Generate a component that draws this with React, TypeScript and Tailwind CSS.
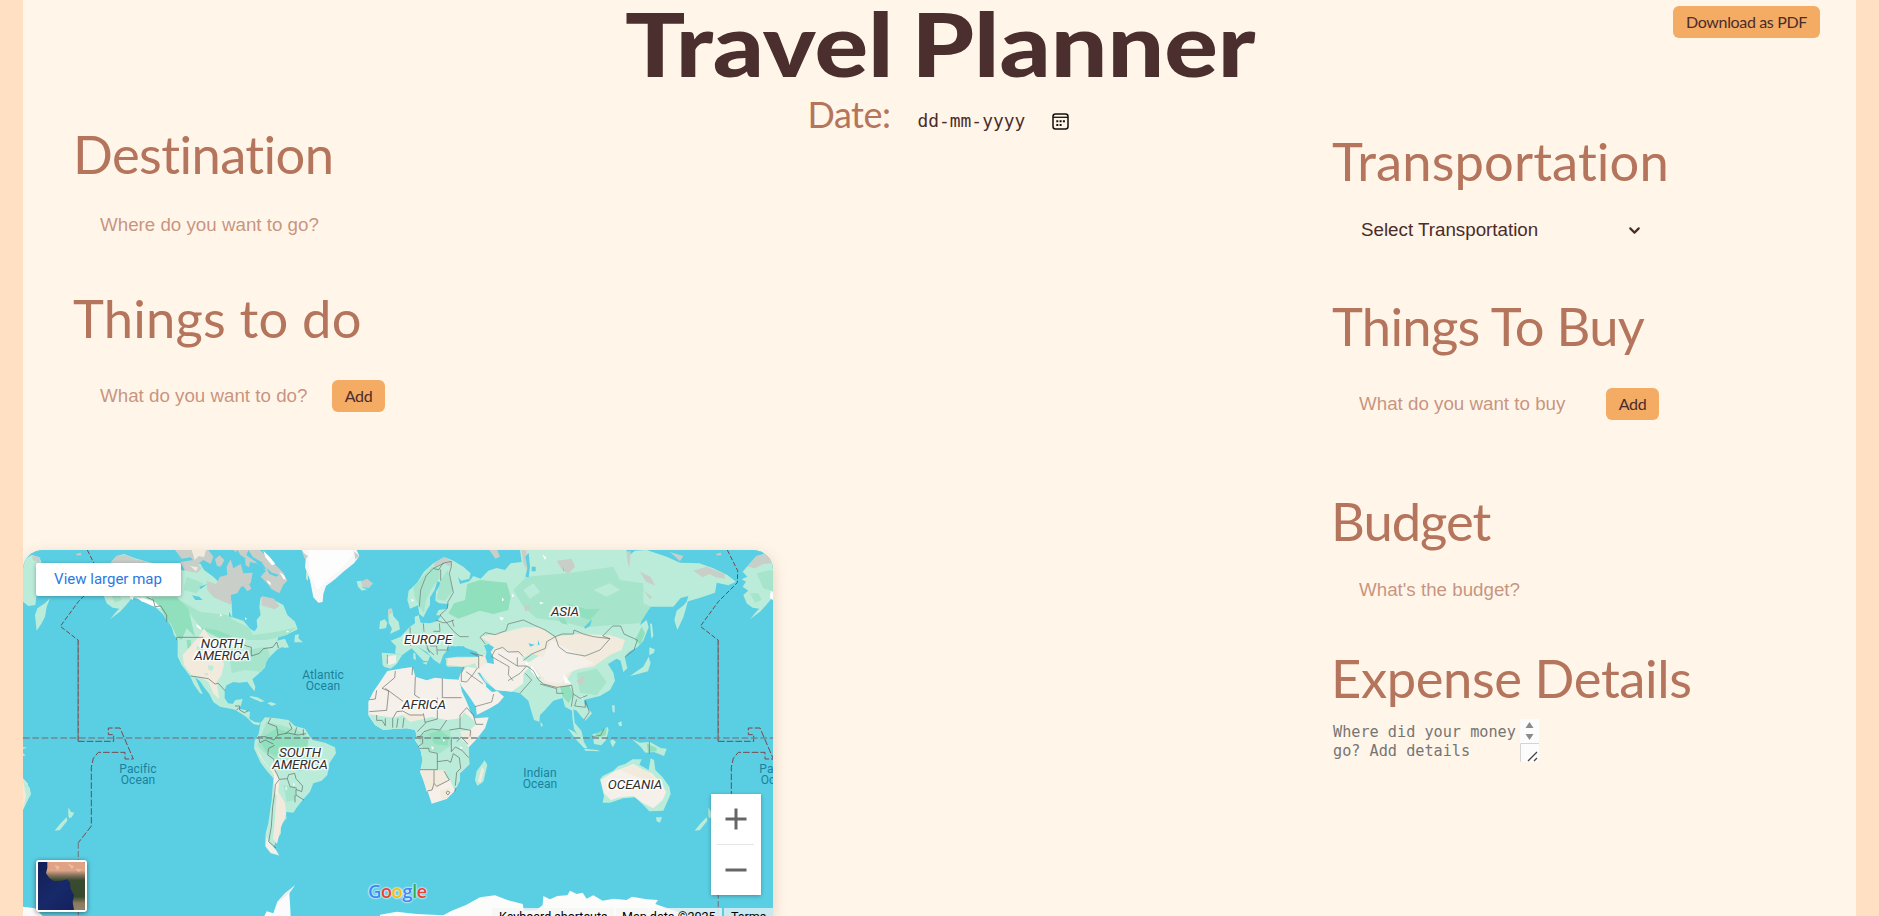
import React from "react";
import { ChevronDown } from "lucide-react";

const HEADING =
  "h-[60px] whitespace-nowrap font-[Lato,sans-serif] text-[52.5px] leading-[62px] text-[#b5745c] [font-variant-ligatures:none]";
const INPUT =
  "h-10 bg-transparent pt-[2px] font-['Liberation_Sans',sans-serif] text-[18.75px] leading-[38px] text-[#4a2c2a] outline-none placeholder:text-[#b5745c]/75";
const BUTTON =
  "h-8 shrink-0 whitespace-nowrap rounded-md bg-[#f4ab64] font-[Lato,sans-serif] text-[16px] leading-8 tracking-[-0.35px] text-[#4a2c2a]";

const WATER = "#5acfe3";
const GREEN = "#bbecd9";
const MID = "#a6e5cb";
const DEEP = "#90dfbd";
const SAND = "#f2eadc";
const PALE = "#f5f0e9";
const GRAY = "#c9cec9";

function CalendarIcon() {
  return (
    <svg width="17" height="17" viewBox="0 0 17 17" fill="none" stroke="#111" strokeWidth="1.5">
      <rect x="1" y="1" width="15" height="15" rx="2.5" />
      <path d="M1 4.3h15" strokeWidth="1.3" />
      <path d="M4.3 8.3h2M7.6 8.3h2M10.9 8.3h2M4.3 11.9h2M7.6 11.9h2" strokeWidth="2" />
    </svg>
  );
}

function Alaska() {
  return (
    <g>
      <path fill={GREEN} d="M308,140 L318,125 305,118 322,110 308,95 330,70 350,48 372,42 405,55 445,66 445,178 415,178 398,172 378,196 360,215 330,238 350,214 358,206 338,203 320,190 310,165 325,152z" />
      <path fill={GRAY} d="M322,80 L350,48 375,44 405,58 445,66 440,82 400,70 370,72 345,85z" />
      <path fill={MID} d="M350,100 l40,-10 50,15 0,40 -40,10 -30,-10z M330,160 l25,0 10,20 -20,8z" />
      <path fill="#fff" d="M392,152 l12,8 -6,20 -8,-6z M410,172 l20,4 12,12 -18,-4z" />
    </g>
  );
}

function Kamchatka() {
  return (
    <path fill={GREEN} d="M105,225 L112,205 135,190 150,175 140,200 135,230 125,250 110,272z" />
  );
}

function DateLine() {
  return (
    <g fill="none">
      <path stroke="#7a474b" strokeWidth="3" strokeDasharray="14 6" d="M262,30 L282,70 293,92 292,128 235,185 181,259 234,300" />
      <path stroke="#7d8b95" strokeWidth="5" d="M234,300 V604" />
      <path stroke="#7a474b" strokeWidth="2" strokeDasharray="16 6" d="M235,300 V604" />
      <path stroke="#7a474b" strokeWidth="3" strokeDasharray="20 6" d="M234,604 H341 V584 H325 V564 H360 L400,657 H375 V637 H295 L280,655 274,682 V858 L235,908" />
      <path stroke="#6f8692" strokeWidth="4" strokeDasharray="18 7" d="M235,908 V1130" />
    </g>
  );
}

function NewZealand() {
  return (
    <g fill={GREEN}>
      <path d="M205,802 l8,14 10,2 -8,14 -8,3 -2,-10z" />
      <path d="M200,832 l2,10 -22,28 -16,2 14,-18z" />
    </g>
  );
}

function Americas() {
  return (
    <g>
      <path fill={GREEN} d="M440,66 L480,72 530,75 548,92 575,85 600,70 612,90 640,110 690,160 695,192 697,232 730,242 752,268 764,274 772,262 770,240 782,225 778,200 782,172 826,182 850,195 862,225 885,245 893,268 865,282 835,292 832,302 855,296 866,322 845,322 830,330 812,348 800,360 795,382 775,402 757,418 766,440 764,454 752,440 742,425 718,428 700,426 680,436 674,450 674,475 684,490 698,492 706,480 728,477 722,498 718,506 735,510 750,516 748,536 764,546 782,548 776,556 760,552 738,530 722,520 700,508 660,500 640,486 628,462 612,442 600,424 585,412 608,462 600,460 582,434 570,408 545,375 533,350 533,300 522,285 515,260 500,240 488,222 465,200 440,185z" />
      <path fill={MID} d="M540,180 L600,215 680,225 700,240 745,262 760,285 830,275 890,262 860,285 800,300 745,300 700,290 640,280 600,262z M690,360 l50,-30 60,-10 10,25 -25,50 -50,-5 -40,10z M560,110 l50,20 -20,30 -40,-10z" />
      <path fill={DEEP} d="M455,172 L530,172 565,205 575,250 585,290 560,265 545,300 530,290 515,255 500,240 485,210 462,192z M590,260 l60,10 50,20 -30,10z M560,300 l12,0 4,30 -14,-5z" />
      <path fill={SAND} d="M572,318 L600,285 612,265 625,285 640,300 660,340 672,372 665,405 650,425 658,478 640,460 625,425 600,412 575,406 552,375 548,345z" />
      <path fill={GREEN} d="M590,318 l20,6 -6,16 -14,-4z M625,375 l16,4 -4,14 -12,-4z M610,400 l14,0 -2,8z" />
      <path fill={GRAY} d="M620,122 L648,132 660,110 682,105 680,80 692,58 700,85 722,72 730,100 758,98 752,130 722,142 712,160 692,165 695,195 664,182 640,172 622,150z M540,66 L580,60 606,84 592,98 556,92z M700,30 H780 L810,60 830,78 850,98 862,122 850,134 838,160 815,148 800,128 782,110 798,92 770,70 740,64 722,50z M525,30 H625 L640,50 632,72 610,60 590,74 572,52 545,56z M645,58 l14,-12 14,14 -10,20 -12,-2z M786,168 l36,8 16,22 -14,10 -40,-12z M730,138 l18,-6 6,14 -12,8z M735,54 l16,8 -4,20 -10,-6z" />
      <path fill={SAND} d="M575,30 H618 L612,52 596,48 584,60z M570,78 l24,4 -6,12z" />
      <path fill={WATER} d="M655,92 l12,-20 5,26z M745,30 l14,22 26,14 14,22 -12,-2 -22,-22 -26,-18z M576,166 l22,4 10,10 -22,0z M598,140 l24,-8 -20,16z M688,215 l8,18 -10,-4z" />
      <path fill={WATER} d="M712,30 l10,16 16,10 -8,6 -14,-10 -10,-14z M668,30 l8,18 -10,4 -10,-20z M800,84 l16,14 20,6 -6,6 -22,-8z" />
      <path fill="#fff" d="M790,32 l20,20 16,20 -10,4 -20,-24z M425,172 l40,14 20,20 -28,-8 -34,-16z M590,252 l14,12 0,6 -14,-10z M660,222 l6,4 -6,4z M735,232 l6,4 -5,4z M860,272 l8,2 -8,4z M838,96 l14,10 6,14 -8,-4z M800,120 l10,6 4,10 -10,-6z" />
      <path fill="#f7f7f7" d="M905,30 L918,50 915,82 930,120 940,172 955,188 968,186 970,162 978,138 1005,118 1030,95 1062,70 1078,48 1070,30z" />
      <path fill="#fdfdfd" d="M925,30 L930,100 952,150 985,118 1020,90 1060,45 1055,30z" />
      <path fill={GRAY} d="M906,36 l18,12 -8,12z M1062,34 l16,14 -12,10z M1085,124 l16,-8 18,14 -12,14 -20,-2z" />
      <path fill={GREEN} d="M1070,124 l14,-2 4,22 14,4 -16,4 -12,-12z M885,285 l12,-2 -2,12 14,12 -26,0z M862,312 l4,10 -16,2z" />
      <path fill={GREEN} d="M750,468 l22,4 22,12 -12,2 -32,-14z M802,490 l10,-4 18,6 -14,6z M918,94 l6,8 0,20 -6,-6z" />
      <path fill={GREEN} d="M782,548 L795,532 830,535 865,540 885,558 915,566 930,590 938,600 975,608 1005,622 1008,640 988,670 982,705 965,722 940,730 930,755 910,778 892,800 880,818 855,815 860,835 842,856 843,880 830,900 820,922 838,947 812,940 795,918 797,880 805,850 815,780 820,715 800,692 782,668 762,625 764,602 776,582z" />
      <path fill={MID} d="M800,545 l40,10 50,15 35,20 0,30 30,30 0,25 -60,20 -60,-30 -45,-30 -18,-20z M850,735 l40,10 -5,35 -25,5z" />
      <path fill={DEEP} d="M790,590 L830,565 890,585 925,600 920,625 850,620 830,650 800,635 782,610z" />
      <path fill={SAND} d="M765,618 l16,34 24,30 18,8 16,26 -4,40 20,32 4,34 -16,40 -12,50 -12,-16 6,-60 8,-112 -22,-36 -22,-30z" />
      <path fill={PALE} d="M822,700 l14,18 -4,50 -10,-10z M800,890 l8,18 20,22 8,14 -24,-6 -14,-18z" />
      <path fill="#fff" d="M856,740 l6,4 -4,8z M880,728 l5,5 -5,6z" />
      <g fill="none" stroke="#5d6965" strokeWidth="2">
        <path d="M530,292 H610 M530,292 v8 M700,300 L740,318 754,322 754,348 778,340 790,326 818,322 830,306 836,325" />
        <path d="M440,172 L460,180 465,200 482,198 500,225 500,245 M572,408 L600,412 625,416 645,432 655,430 675,452 M705,498 h14 v12 l14,8 12,-6 M708,512 l10,-10" />
        <path d="M812,534 L804,550 830,560 834,585 822,600 796,590 775,590 780,608 796,600 820,612 M868,548 l8,18 -20,15 M890,562 l-6,22 M910,568 l0,18 M834,585 l30,-6 30,6 24,-4 M824,616 L806,625 803,645 822,658 824,690 830,700 838,718 862,716 866,704 884,700 888,716 908,738 905,755 888,748 888,765 912,780 M838,718 L826,734 824,760 818,800 814,860 806,905 828,924 M862,716 l8,24 20,4 M885,765 l0,22" />
      </g>
    </g>
  );
}

function OldWorld() {
  return (
    <g>
      <path fill={GREEN} d="M5,338 L48,341 66,346 50,372 32,386 12,380 8,374z" />
      <path fill={GREEN} d="M45,340 L48,318 32,302 62,290 88,262 105,250 104,230 116,226 122,248 150,250 172,243 184,226 168,226 176,210 202,206 206,192 178,190 166,182 168,155 184,128 172,124 164,150 150,172 150,195 142,208 130,232 118,222 114,196 90,206 82,180 86,152 110,130 132,95 160,70 192,52 216,60 250,80 272,100 268,116 244,122 234,112 240,132 268,124 280,108 302,116 325,92 350,84 375,90 392,70 425,66 420,30 H740 L742,50 765,32 800,30 860,50 900,68 958,70 1000,85 1042,105 1068,125 1045,136 1010,128 1005,158 965,172 920,185 925,168 902,174 880,200 812,200 786,235 780,256 800,240 806,262 790,302 772,322 748,335 734,350 742,385 730,396 725,376 722,362 710,356 684,372 700,398 705,422 690,450 660,468 632,475 612,480 614,492 636,520 616,542 604,530 590,512 580,508 584,548 604,572 612,604 594,588 582,566 578,540 576,512 555,500 548,474 520,482 495,510 480,525 478,545 462,540 450,500 445,482 420,460 400,455 345,450 318,430 312,412 300,400 285,395 240,405 252,380 202,380 196,355 230,350 300,350 290,335 240,318 210,320 190,345 180,372 162,360 140,336 110,318 150,348 144,364 130,362 95,325 66,346z" />
      <path fill={SAND} d="M300,290 L380,275 430,262 480,262 520,290 590,282 690,286 735,300 725,330 690,345 640,380 580,390 560,420 575,445 520,440 490,430 470,408 440,380 300,400 285,370 250,380 200,374 205,355 290,352 330,340 330,310z" />
      <path fill={PALE} d="M345,325 L430,345 490,350 515,300 540,315 600,345 640,370 600,385 560,400 545,430 500,425 455,375 430,400 430,430 395,455 345,450 312,412 296,385 330,365z" />
      <path fill={PALE} d="M242,400 L262,380 298,386 320,430 318,440 335,455 352,453 372,470 355,490 330,505 290,525 285,500 265,470 245,440 236,418z" />
      <path fill={PALE} d="M18,350 l30,-4 0,22 -22,8z" />
      <path fill={MID} d="M100,140 L155,80 180,85 178,115 158,140 138,180 132,220 118,200 104,170z M182,120 l20,-30 18,60 -25,32 -25,-4z M440,110 L560,100 700,80 720,120 790,130 790,190 812,200 780,250 700,255 610,262 550,245 470,235 430,200 400,150z M590,400 l60,-14 30,40 -30,40 -50,-8z" />
      <path fill={DEEP} d="M262,132 L300,120 380,128 392,170 385,210 340,222 300,212 235,236 205,220 222,190 255,180z M520,210 l24,10 20,34 -20,-4z M560,190 l60,18 40,-2 -30,34 -30,-10z M765,300 l20,-40 10,20 -14,34z M540,440 l28,-4 12,28 -14,26 -18,-20z" />
      <path fill={GREEN} d="M430,150 l30,-20 20,26 -30,20z M640,150 l50,-20 30,20 -40,20z M425,355 l30,-14 22,6 -30,20z M440,375 l20,10 24,30 -14,4z" />
      <path fill={GRAY} d="M160,72 l32,-20 24,12 -6,16 -20,-12 -24,14z M530,62 l45,-6 10,24 -20,22 -20,-14z M780,95 l32,16 14,26 -28,-12z M790,150 l26,22 -6,6z M940,92 l40,-12 54,22 0,14 -26,-4 -20,-10 -20,10z M432,200 l14,-6 6,12 -16,8z M328,30 h24 l8,20 -14,6z M424,30 h16 l0,60 -10,-20z M590,422 l20,-14 4,16 -14,12z M740,34 l12,0 -4,50 -6,-20z M870,36 l40,12 -10,16z" />
      <path fill={WATER} d="M436,50 L446,38 450,80 446,112 436,110 442,85z M455,80 h12 v14 h-12z M200,340 L202,322 218,318 232,325 250,318 270,335 282,345 240,345 218,350z M312,316 L326,312 342,322 332,336 340,352 342,372 322,368 316,350 320,336z M292,398 L300,398 316,426 340,444 350,452 338,456 320,436z M238,440 L246,440 268,470 288,500 290,524 282,520 262,480z M445,310 l20,4 -14,6z M475,300 l4,14 -6,2z M612,262 l24,-24 -6,20 -14,8z M548,80 l5,12 -3,2z" />
      <path fill="#fff" d="M455,376 l24,34 -12,0 -16,-20z M550,402 l24,30 -20,-4z M487,44 l12,8 -4,8z M395,160 l8,8 -6,4z M366,172 l6,8 -6,4z M478,185 l14,4 -10,4z M358,230 l14,4 -8,8z M94,176 l8,4 -6,6z M600,470 l10,0 -2,8z M436,366 l10,4 -6,10z" />
      <path fill={GREEN} d="M24,210 l12,-4 4,22 16,18 4,22 -30,14 6,-16 -10,-18z M0,244 l14,-6 8,10 -4,16 -20,4z M126,368 l16,-2 -2,8z M100,340 l6,0 2,20 -8,-4z M198,368 l6,4 -6,6z" />
      <path fill={GRAY} d="M24,208 l10,-4 2,14 -10,6z" />
      <path fill={GREEN} d="M808,322 l16,6 -2,10 -14,8z M806,350 l6,20 -8,24 -30,8 -24,6 20,-14 20,-14z M810,250 l6,2 4,36 -6,8z M883,240 L890,212 912,195 925,178 918,205 910,232 892,270z" />
      <path fill={GREEN} d="M696,496 l8,0 0,22 -6,-2z M564,566 l20,10 26,26 12,22 -10,0 -26,-28z M638,582 l24,-4 20,-18 4,10 -8,30 -14,16 -22,-4z M690,604 l8,-6 10,8 -10,16z M612,626 l40,4 8,4 -44,-2z M756,598 l24,10 30,-2 32,18 18,2 -8,22 -30,-12 -26,2 -14,-18z M714,548 l10,-4 2,14 -8,0z M481,545 l8,10 -6,6z" />
      <path fill={DEEP} d="M645,582 l20,-10 16,-8 -4,22 -20,6z M800,610 l30,14 0,10 -26,2z" />
      <path fill={GREEN} d="M828,832 h18 l-6,16 -10,-4z" />
      <path fill={GREEN} d="M660,718 L668,708 700,692 715,678 735,672 758,658 785,658 778,674 806,690 812,655 822,660 826,690 848,712 868,740 872,762 850,812 808,814 790,795 765,772 730,775 690,788 668,788 672,768z" />
      <path fill={PALE} d="M662,720 L705,693 740,680 760,672 790,690 815,700 846,732 858,756 848,780 820,805 790,790 760,768 720,772 692,780 672,760z" />
      <path fill={SAND} d="M720,690 l40,-14 50,24 30,30 10,24 -20,-10 -50,-30z" />
      <g transform="translate(-60,375)">
        <path fill={PALE} d="M82,18 L130,10 158,6 166,35 200,46 225,38 262,42 298,44 306,80 320,110 332,142 345,160 386,157 375,190 350,222 325,248 328,298 300,325 300,345 284,378 260,402 215,416 205,385 180,320 188,285 180,248 165,225 170,210 165,195 140,190 100,192 70,195 45,180 25,150 25,110 40,80 66,42z" />
        <path fill={GREEN} d="M26,148 L60,152 100,158 128,150 150,170 190,162 215,155 260,165 300,160 312,142 340,165 348,178 330,195 300,200 310,215 326,248 328,298 300,325 300,345 284,376 270,345 240,330 215,316 182,314 188,285 180,248 165,225 170,210 165,195 140,190 100,192 70,195 45,180z" />
        <path fill={MID} d="M170,215 L210,195 270,195 275,240 240,265 190,250z" />
        <path fill={DEEP} d="M205,208 L240,195 268,215 262,242 225,238z" />
        <path fill={SAND} d="M128,148 l60,0 0,14 -40,6z M182,316 L255,316 262,350 230,370 200,380z M302,198 l34,0 6,24 -20,16 -18,-14z M240,378 l30,-10 -6,30 -20,6z" />
        <path fill={GREEN} d="M374,286 L382,300 370,350 352,362 345,345 350,318z" />
        <path fill={SAND} d="M366,305 l6,10 -10,38 -8,-4z" />
        <path fill="#fff" d="M214,242 l8,6 -6,6z M300,244 l8,4 -6,6z M248,222 l8,4 -6,4z" />
        <g fill="none" stroke="#646a67" strokeWidth="2">
          <path d="M66,70 L104,38 106,18 M66,70 L86,78 80,136 28,140 M76,70 L130,110 M166,35 L164,90 180,100 M158,6 L156,30 M247,40 V98 H305 M232,98 V130 M28,104 L46,102 50,76 M100,158 L110,140 128,138 150,150 190,150 M190,145 L196,175 172,200 M232,130 L232,162 M232,162 L196,172 M260,165 L240,195 215,192 192,200 180,215 170,215 M300,150 L300,190 268,195 M300,150 L320,128 340,150 348,178 370,178 M300,190 L332,196 330,215 M50,150 v16 l16,0 10,16 M76,160 v22 M98,158 v30 M114,160 l-4,28 M132,158 l-4,30 M180,250 L206,250 208,260 232,265 232,314 H180 M222,316 V355 L230,364 268,345 252,318 M222,355 L216,375 202,378 M232,290 l30,-4 10,6 8,-26 18,12 4,32 -12,12 -4,40 M274,216 l0,44 12,-14 20,10 20,22 M290,230 l14,-14 20,22 M262,378 l8,4 -6,8 -6,-6z M172,215 h16 v20 l-14,10 M284,380 l4,-12" />
        </g>
      </g>
      <g fill="none" stroke="#6a7571" strokeWidth="2">
        <path d="M118,200 L122,150 138,108 160,85 176,90 188,70 214,64 214,80 208,100 220,158 204,185 202,205 M182,88 V122 M160,85 L192,70 M202,205 L180,225 200,248 222,240 M168,240 l20,8 12,0 M200,248 L222,275 240,290 266,290 M222,260 L216,240 M130,250 L132,275 M90,262 L92,318 M178,250 l2,24 -20,0 M160,290 l0,20 -30,-6 M120,300 l20,14 8,24 M150,318 h20 l2,26 M172,330 l34,0 M208,308 l-6,20 M140,325 l22,20 M22,345 l0,26" />
        <path d="M316,312 L300,292 316,278 345,284 378,272 384,252 430,240 464,256 496,270 526,290 500,305 496,325 455,342 430,362 M345,330 L368,322 384,336 416,335 430,350 M345,330 l-10,20 52,30 -2,24 14,18 M355,342 L412,378 440,378 420,400 384,422 M412,378 l0,-26 M526,290 L546,282 580,282 582,270 610,282 640,290 690,296 660,330 615,348 560,338 536,320 526,290 M690,296 L668,288 698,258 722,258 732,282 772,300 762,330 736,350 M474,418 L490,432 530,442 575,436 M440,378 L460,392 474,418 M436,400 L455,420 420,460 M480,432 l50,14 0,14 20,0 M575,436 L580,462 574,500 M580,462 L600,475 622,466 M590,478 l-6,20 32,4 0,-20 12,34 -16,24 M808,605 V642 M636,590 l26,-4 10,-20 M252,380 l-8,20 0,24 16,2 20,-24 12,-18 M258,395 l50,36 M296,385 V350 L276,340 M285,500 l50,-14 6,-24 M270,338 l40,10" />
      </g>
      <path fill="#fcfcfb" d="M-130,1130 L0,1130 0,1124 50,1115 110,1122 190,1126 215,1112 258,1095 300,1072 345,1066 382,1080 428,1092 432,1112 470,1110 488,1095 490,1068 510,1078 532,1068 562,1066 570,1052 590,1062 608,1058 620,1076 640,1066 668,1082 700,1076 740,1080 756,1070 800,1078 834,1080 826,1092 860,1104 900,1118 930,1130z" />
    </g>
  );
}

const HALO =
  "[text-shadow:0_0_2px_#fff,1.5px_1px_1px_#fff,-1.5px_-1px_1px_#fff,1.5px_-1px_1px_#fff,-1.5px_1px_1px_#fff,0_0_3px_#fff,0_0_3px_#fff]";
const CONTINENT =
  "absolute -translate-x-1/2 whitespace-nowrap text-center font-[Roboto,sans-serif] text-[13.5px] italic leading-[12.3px] tracking-[-0.1px] text-[#2f2f2f] " + HALO;
const OCEAN =
  "absolute -translate-x-1/2 whitespace-nowrap text-center font-[Roboto,sans-serif] text-[12px] leading-[11px] tracking-[0.1px] text-[#1a819b]";

function WorldMap() {
  return (
    <div className="relative h-[366px] w-[750px] overflow-hidden rounded-t-[20px] bg-[#5acfe3]">
      <svg className="block" width="750" height="366" viewBox="69 30 2250 1098">
        <rect x="69" y="30" width="2250" height="1098" fill={WATER} />
        <path fill={GREEN} d="M69,60 L95,45 118,52 125,68 110,75 118,95 106,195 85,198 69,185z" />
        <path fill={GRAY} d="M95,48 l26,4 -4,16 -18,-8z M228,42 l14,-4 2,8 -14,0z" />
        <Kamchatka />
        <Alaska />
        <Americas />
        <NewZealand />
        <path fill={SAND} d="M69,715 L82,730 92,760 69,810z" />
        <path fill={GREEN} d="M69,718 L90,745 92,765 80,785 69,808 78,770z M69,622 h12 l-12,6z M69,640 l8,6 -8,2z" />
        <path fill="#fbfbfb" d="M885,1036 L868,1060 870,1090 872,1130 H792 L800,1114 820,1120 832,1085 855,1060z M69,1100 L105,1105 130,1130 H69z" />
        <path fill="#e8e8e8" d="M885,1036 L862,1062 840,1084 846,1072z" />
        <g transform="translate(1140,0)">
          <OldWorld />
        </g>
        <g transform="translate(1920,0)">
          <Alaska />
          <NewZealand />
          <path fill={GRAY} d="M228,42 l14,-4 2,8 -14,0z" />
          <DateLine />
        </g>
        <DateLine />
        <path d="M69,594 H2319" stroke="#75868e" strokeWidth="5" strokeDasharray="20 8" />
      </svg>

      <span className={CONTINENT + " left-[199px] top-[87px]"}>NORTH<br />AMERICA</span>
      <span className={CONTINENT + " left-[277px] top-[196px]"}>SOUTH<br />AMERICA</span>
      <span className={CONTINENT + " left-[405px] top-[83px]"}>EUROPE</span>
      <span className={CONTINENT + " left-[401px] top-[148px]"}>AFRICA</span>
      <span className={CONTINENT + " left-[542px] top-[55px]"}>ASIA</span>
      <span className={CONTINENT + " left-[612px] top-[228px]"}>OCEANIA</span>
      <span className={OCEAN + " left-[300px] top-[120px]"}>Atlantic<br />Ocean</span>
      <span className={OCEAN + " left-[115px] top-[214px]"}>Pacific<br />Ocean</span>
      <span className={OCEAN + " left-[517px] top-[218px]"}>Indian<br />Ocean</span>
      <span className={OCEAN + " left-[755px] top-[214px]"}>Pacific<br />Ocean</span>

      <a className="absolute left-[13px] top-[13px] h-[33px] w-[145px] rounded-[2px] bg-white pr-px text-center font-[Roboto,sans-serif] text-[15px] leading-[32px] text-[#2b78e4] shadow-[0_1px_4px_rgba(0,0,0,0.3)]">
        View larger map
      </a>

      <div className="absolute left-[13px] top-[310px] h-[52px] w-[51px] overflow-hidden rounded-[3px] border-2 border-white bg-[#14275f] shadow-[0_1px_5px_rgba(0,0,0,0.5)]">
        <svg width="47" height="48" viewBox="0 0 141 144" preserveAspectRatio="none">
          <defs>
            <linearGradient id="terrain" x1="0" y1="0" x2="0" y2="1">
              <stop offset="0" stopColor="#e3a184" />
              <stop offset="0.18" stopColor="#dba488" />
              <stop offset="0.28" stopColor="#83705a" />
              <stop offset="0.38" stopColor="#3a4a30" />
              <stop offset="0.72" stopColor="#364a2c" />
              <stop offset="0.86" stopColor="#8b7b5e" />
              <stop offset="1" stopColor="#97806a" />
            </linearGradient>
            <linearGradient id="sea" x1="0" y1="0" x2="1" y2="1">
              <stop offset="0" stopColor="#131f55" />
              <stop offset="0.5" stopColor="#18296a" />
              <stop offset="1" stopColor="#121f58" />
            </linearGradient>
          </defs>
          <rect width="141" height="144" fill="url(#sea)" />
          <path d="M28 0H141V144H108L104 120 108 100 98 80 96 62 88 52 70 56 48 58 34 48 24 34 28 18z" fill="url(#terrain)" />
          <path d="M50 8l16 6-8 12zM88 4l20 8-6 10zM112 20l20 2-10 8z" fill="#efbb9b" />
        </svg>
      </div>

      <div className="absolute left-[345px] top-[329px] font-['Open_Sans',sans-serif] text-[18.5px] font-semibold leading-[24px] tracking-[-0.6px] [text-shadow:0_0_2px_#fff,0_0_2px_#fff]">
        <span className="text-[#4285f4]">G</span>
        <span className="text-[#ea4335]">o</span>
        <span className="text-[#fbbc05]">o</span>
        <span className="text-[#4285f4]">g</span>
        <span className="text-[#34a853]">l</span>
        <span className="text-[#ea4335]">e</span>
      </div>

      <div className="absolute left-[688px] top-[244px] flex h-[101px] w-[50px] flex-col items-center bg-white shadow-[0_1px_4px_rgba(0,0,0,0.3)]">
        <svg width="50" height="101" viewBox="0 0 50 101">
          <path d="M14.500 25h21M25 14.500v21M14.500 76h21" stroke="#666" strokeWidth="3" />
          <path d="M6 50.500h37" stroke="#e6e6e6" />
        </svg>
      </div>

      <div className="absolute left-[469px] top-[358px] flex h-[18px] gap-[2px] whitespace-nowrap font-[Roboto,sans-serif] text-[12.500px] leading-[17px] text-black">
        <span className="w-[122px] bg-[#f5f5f5]/80 pl-[7px]">Keyboard shortcuts</span>
        <span className="w-[106px] bg-[#f5f5f5]/80 pl-[6px]">Map data ©2025</span>
        <span className="w-[60px] bg-[#f5f5f5]/70 pl-[7px]">Terms</span>
      </div>
    </div>
  );
}

export default function App() {
  return (
    <div className="relative flex h-[916px] w-full flex-col overflow-hidden border-x-[23px] border-[#ffe0c3] bg-[#fff5e9]">
      <header className="flex h-[123px] shrink-0 flex-col items-center">
        <h1 className="h-[85px] scale-x-[1.15] whitespace-nowrap pl-px font-[Lato,sans-serif] text-[87px] font-black leading-[87px] text-[#4b2e2e] [word-spacing:-5px]">
          Travel Planner
        </h1>
        <div className="mt-[7px] flex h-11 items-start pr-[3px]">
          <label className="w-[110px] font-[Lato,sans-serif] text-[36px] leading-[45px] tracking-[-0.5px] text-[#b5745c]">
            Date:
          </label>
          <span className="w-[134px] pt-[12px] font-['DejaVu_Sans_Mono',monospace] text-[17.900px] leading-[33px] text-[#4a2c2a]">
            dd-mm-yyyy
          </span>
          <span className="mt-[21px]"><CalendarIcon /></span>
        </div>
      </header>
      <button className={BUTTON + " absolute right-[36px] top-[6px] w-[147px]"}>Download as PDF</button>

      <main className="flex flex-1 justify-between">
        <section className="flex w-[750px] flex-col">
          <div className="pl-[50px]">
            <h2 className={HEADING + " tracking-[-0.6px]"}>Destination</h2>
            <input className={INPUT + " ml-[27px] mt-[21px] block w-[240px]"} placeholder="Where do you want to go?" />
            <h2 className={HEADING + " mt-[43px] tracking-[0.2px]"}>Things to do</h2>
            <div className="ml-[27px] mt-[28px] flex items-center">
              <input className={INPUT + " w-[232px]"} placeholder="What do you want to do?" />
              <button className={BUTTON + " mt-[2px] w-[53px]"}>Add</button>
            </div>
          </div>
          <div className="mt-[135px] rounded-t-[20px] shadow-[0_4px_14px_rgba(150,100,60,0.25)]">
            <WorldMap />
          </div>
        </section>

        <section className="flex w-[524px] flex-col pt-[7px]">
          <h2 className={HEADING + " tracking-[0.1px]"}>Transportation</h2>
          <div className="ml-[29px] mt-[20px] flex h-10 w-[282px] items-center justify-between">
            <span className="font-['Liberation_Sans',sans-serif] text-[18.750px] leading-10 text-[#4a2c2a]">
              Select Transportation
            </span>
            <ChevronDown size={17} strokeWidth={3} color="#4a2c2a" />
          </div>
          <h2 className={HEADING + " mt-[45px] tracking-[-0.7px]"}>Things To Buy</h2>
          <div className="ml-[27px] mt-[28px] flex items-center">
            <input className={INPUT + " w-[247px]"} placeholder="What do you want to buy" />
            <button className={BUTTON + " mt-[2px] w-[53px]"}>Add</button>
          </div>
          <h2 className={HEADING + " -ml-px mt-[67px] tracking-[-1px]"}>Budget</h2>
          <input className={INPUT + " ml-[27px] mt-[19px] block w-[240px]"} placeholder="What's the budget?" />
          <h2 className={HEADING + " -ml-px mt-[38px] tracking-[-0.4px]"}>Expense Details</h2>
          <div className="mt-[12px] flex">
            <textarea
              className="h-[43px] w-[188px] resize-none overflow-hidden bg-transparent pl-[1px] pt-[4px] font-['DejaVu_Sans_Mono',monospace] text-[15.200px] leading-[19px] outline-none placeholder:text-[#757575]"
              placeholder={"Where did your money go? Add details"}
            />
            <svg width="19" height="43" viewBox="0 0 19 43">
              <rect width="19" height="43" fill="#fcfcfc" />
              <path d="M9.500 3L13.500 9H5.500zM9.500 21L13.500 15H5.500z" fill="#8b8b8b" />
              <path d="M.5 43V24.500H19" fill="none" stroke="#d4d4d4" />
              <path d="M8 42L17 33M14 42L17 39" stroke="#444" strokeWidth="1.3" />
            </svg>
          </div>
        </section>
      </main>
    </div>
  );
}
